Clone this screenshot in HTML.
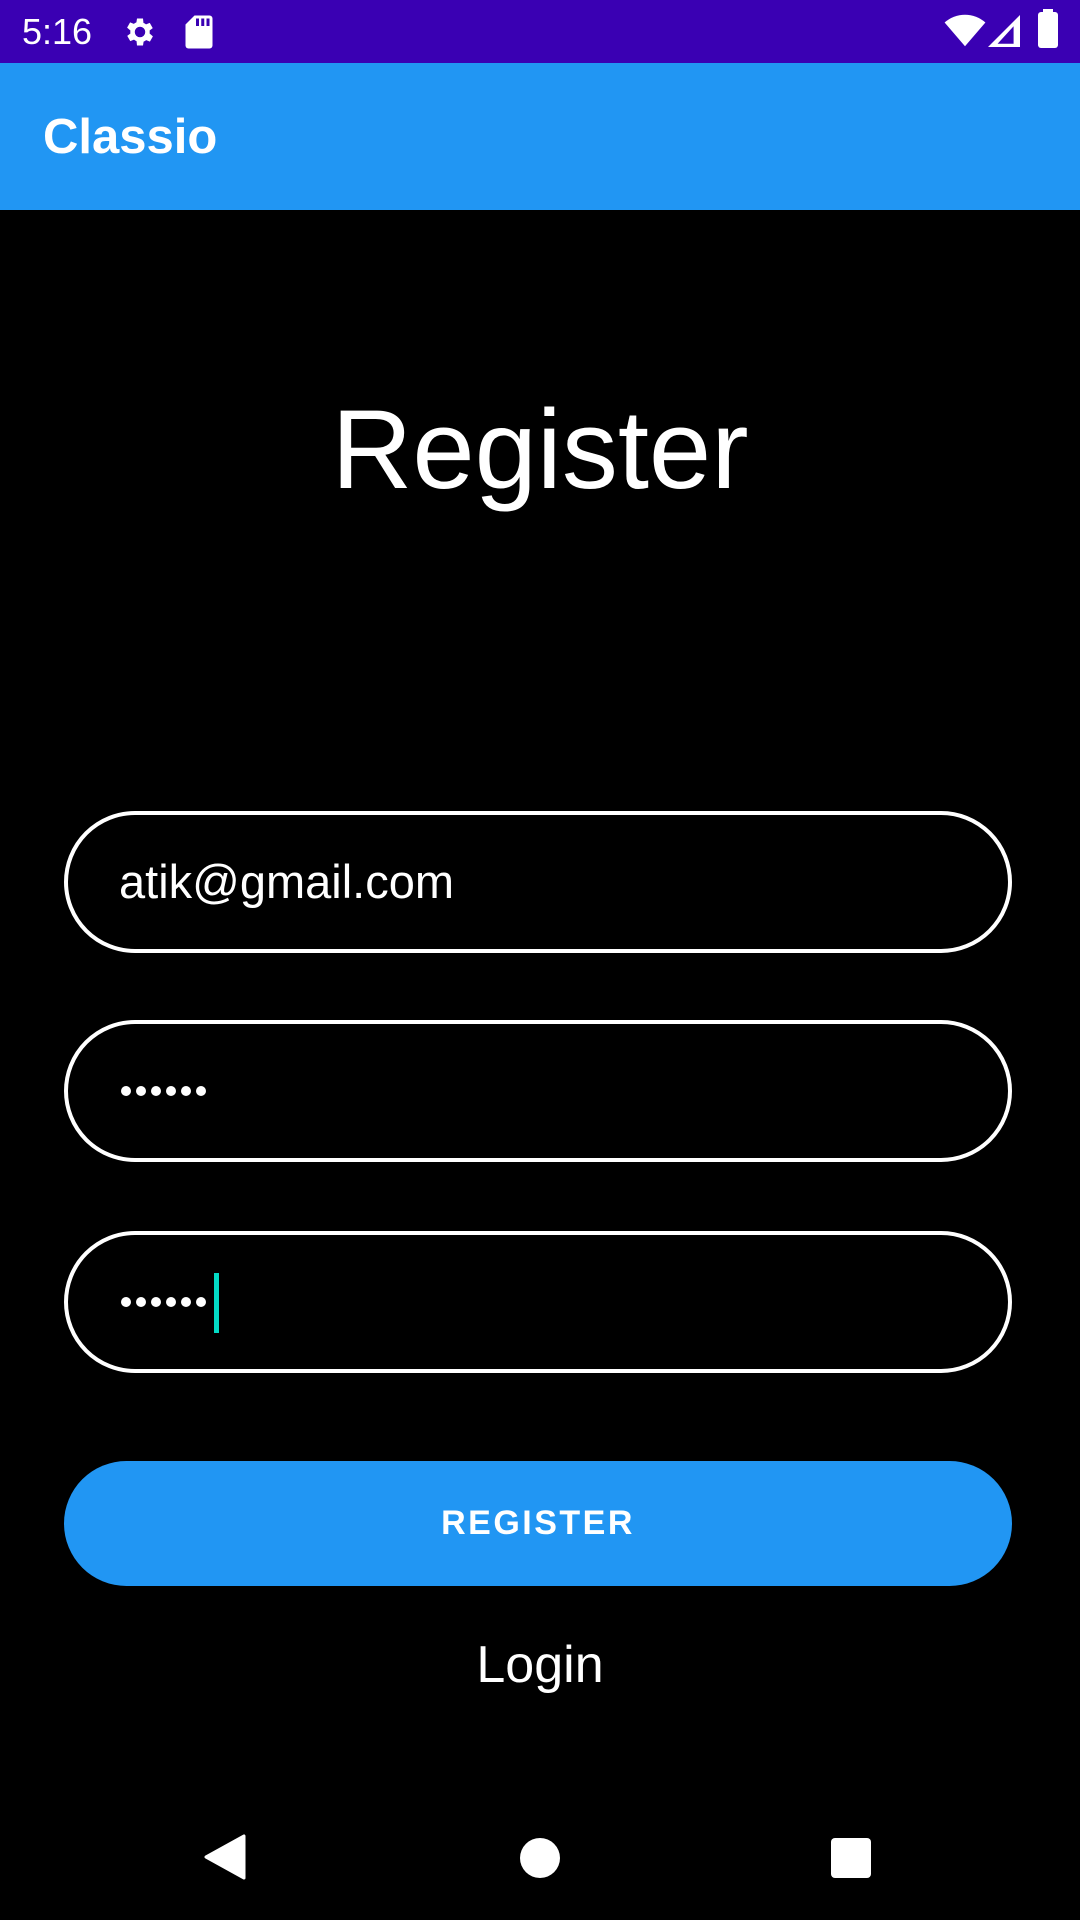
<!DOCTYPE html>
<html><head><meta charset="utf-8">
<style>
*{margin:0;padding:0;box-sizing:border-box}
body{width:1080px;height:1920px;background:#000;font-family:"Liberation Sans",sans-serif;color:#fff;position:relative;overflow:hidden}
.status{position:absolute;left:0;top:0;width:1080px;height:63px;background:#3A00B3}
.time{position:absolute;left:22px;top:10px;font-size:36px;line-height:44px}
.appbar{position:absolute;left:0;top:63px;width:1080px;height:147px;background:#2196F3}
.appbar span{position:absolute;left:43px;top:44px;font-size:49px;font-weight:bold;line-height:60px}
.title{position:absolute;left:0;width:1080px;top:385px;text-align:center;font-size:112px;line-height:130px}
.field{position:absolute;left:64px;width:948px;height:142px;border:4px solid #fff;border-radius:71px}
.field span{position:absolute;left:51px;top:0;line-height:134px;font-size:47px}
.dots{position:absolute;left:53px;top:62px;display:flex;gap:5px}
.dots i{width:10px;height:10px;border-radius:50%;background:#fff;display:block}
.btn{position:absolute;left:64px;top:1461px;width:948px;height:125px;border-radius:63px;background:#2196F3;text-align:center;line-height:125px;font-size:34px;letter-spacing:2.5px;font-weight:bold}
.login{position:absolute;left:0;width:1080px;top:1635px;text-align:center;font-size:52px;line-height:60px}
</style></head><body>
<div class="status">
<div class="time">5:16</div>
<svg style="position:absolute;left:122px;top:14px" width="36" height="36" viewBox="0 0 24 24"><path fill="#fff" d="M19.4 13a7.5 7.5 0 0 0 0-2l2.1-1.6-2-3.5-2.5 1a7 7 0 0 0-1.7-1L15 3h-4l-.4 2.6a7 7 0 0 0-1.7 1l-2.5-1-2 3.5L6.6 11a7.5 7.5 0 0 0 0 2l-2.1 1.6 2 3.5 2.5-1a7 7 0 0 0 1.7 1L11 21h4l.4-2.6a7 7 0 0 0 1.7-1l2.5 1 2-3.5zM13 15.5a3.5 3.5 0 1 1 0-7 3.5 3.5 0 0 1 0 7z" transform="translate(-1 0)"/></svg>
<svg style="position:absolute;left:184px;top:14px" width="30" height="36" viewBox="0 0 20 24"><path fill="#fff" d="M7 1h10a2 2 0 0 1 2 2v18a2 2 0 0 1-2 2H3a2 2 0 0 1-2-2V7z"/><rect x="8" y="3" width="2" height="5" fill="#3A00B3"/><rect x="11.5" y="3" width="2" height="5" fill="#3A00B3"/><rect x="15" y="3" width="2" height="5" fill="#3A00B3"/></svg>
<svg style="position:absolute;left:944px;top:14px" width="42" height="34" viewBox="0 0 24 20"><path fill="#fff" d="M12 19L0 5a18 18 0 0 1 24 0z"/></svg>
<svg style="position:absolute;left:988px;top:14px" width="32" height="34" viewBox="0 0 20 20"><path fill="#fff" d="M20 0v20H0z"/><path fill="#3A00B3" d="M16 7v11H6z"/></svg>
<div style="position:absolute;left:1038px;top:12px;width:20px;height:36px;background:#fff;border-radius:3px"></div>
<div style="position:absolute;left:1043px;top:9px;width:10px;height:5px;background:#fff"></div>
</div>
<div class="appbar"><span>Classio</span></div>
<div class="title">Register</div>
<div class="field" style="top:811px"><span>atik@gmail.com</span></div>
<div class="field" style="top:1020px"><div class="dots"><i></i><i></i><i></i><i></i><i></i><i></i></div></div>
<div class="field" style="top:1231px"><div class="dots"><i></i><i></i><i></i><i></i><i></i><i></i></div><div style="position:absolute;left:146px;top:38px;width:5px;height:60px;background:#03DAC5"></div></div>
<div class="btn">REGISTER</div>
<div class="login">Login</div>
<svg style="position:absolute;left:204px;top:1834px" width="42" height="46" viewBox="0 0 42 46"><path fill="#fff" d="M40 2v42L2 23z" stroke="#fff" stroke-width="3" stroke-linejoin="round"/></svg>
<div style="position:absolute;left:520px;top:1838px;width:40px;height:40px;border-radius:50%;background:#fff"></div>
<div style="position:absolute;left:831px;top:1838px;width:40px;height:40px;border-radius:4px;background:#fff"></div>
</body></html>
